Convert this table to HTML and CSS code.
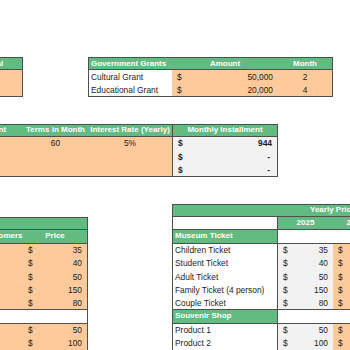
FILE: index.html
```html
<!DOCTYPE html>
<html lang="en">
<head>
    <meta charset="UTF-8">
    <meta name="viewport" content="width=device-width, initial-scale=1.0">
    <title>Museum Budget</title>
    <link rel="stylesheet" href="styles.css">
</head>
<body>

<div class="sheet">

    <!-- own funds -->
    <div class="tbl fund">
        <div class="cell head mid">Own Capital</div>
        <div class="cell peach"></div>
        <div class="cell peach"></div>
    </div>

    <!-- grants -->
    <div class="tbl grants">
        <div class="cell head">Government Grants</div>
        <div class="cell head mid">Amount</div>
        <div class="cell head mid">Month</div>
        <div class="cell">Cultural Grant</div>
        <div class="cell peach acc"><span>$</span><span>50,000</span></div>
        <div class="cell peach mid">2</div>
        <div class="cell">Educational Grant</div>
        <div class="cell peach acc"><span>$</span><span>20,000</span></div>
        <div class="cell peach mid">4</div>
    </div>

    <!-- loan -->
    <div class="tbl loan">
        <div class="cell head mid">Loan Amount</div>
        <div class="cell head mid">Terms in Month</div>
        <div class="cell head mid">Interest Rate (Yearly)</div>
        <div class="cell head mid split">Monthly Installment</div>
        <div class="cell peach"></div>
        <div class="cell peach mid">60</div>
        <div class="cell peach mid">5%</div>
        <div class="cell grey acc strong split"><span>$</span><span>944</span></div>
        <div class="cell peach"></div>
        <div class="cell peach"></div>
        <div class="cell peach"></div>
        <div class="cell grey acc strong split"><span>$</span><span class="nil">-</span></div>
        <div class="cell peach"></div>
        <div class="cell peach"></div>
        <div class="cell peach"></div>
        <div class="cell grey acc strong split"><span>$</span><span class="nil">-</span></div>
    </div>

    <!-- visitors -->
    <div class="tbl visitors">
        <div class="cell head span2 line"></div>
        <div class="cell head mid line">Number of Customers</div>
        <div class="cell head mid line">Price</div>
        <div class="cell peach"></div>
        <div class="cell peach acc"><span>$</span><span>35</span></div>
        <div class="cell peach"></div>
        <div class="cell peach acc"><span>$</span><span>40</span></div>
        <div class="cell peach"></div>
        <div class="cell peach acc"><span>$</span><span>50</span></div>
        <div class="cell peach"></div>
        <div class="cell peach acc"><span>$</span><span>150</span></div>
        <div class="cell peach line"></div>
        <div class="cell peach acc line"><span>$</span><span>80</span></div>
        <div class="cell line"></div>
        <div class="cell line"></div>
        <div class="cell peach"></div>
        <div class="cell peach acc"><span>$</span><span>50</span></div>
        <div class="cell peach"></div>
        <div class="cell peach acc"><span>$</span><span>100</span></div>
    </div>

    <!-- yearly prices -->
    <div class="tbl prices">
        <div class="cell head line"></div>
        <div class="cell head line span3 title">Yearly Price</div>

        <div class="cell line split-r"></div>
        <div class="cell head mid line">2025</div>
        <div class="cell head mid line">2026</div>
        <div class="cell head mid line">2027</div>

        <div class="cell head line split-r">Museum Ticket</div>
        <div class="cell line"></div>
        <div class="cell line"></div>
        <div class="cell line"></div>

        <div class="cell split-r">Children Ticket</div>
        <div class="cell grey acc"><span>$</span><span>35</span></div>
        <div class="cell peach acc"><span>$</span><span>40</span></div>
        <div class="cell peach"></div>

        <div class="cell split-r">Student Ticket</div>
        <div class="cell grey acc"><span>$</span><span>40</span></div>
        <div class="cell peach acc"><span>$</span><span>45</span></div>
        <div class="cell peach"></div>

        <div class="cell split-r">Adult Ticket</div>
        <div class="cell grey acc"><span>$</span><span>50</span></div>
        <div class="cell peach acc"><span>$</span><span>55</span></div>
        <div class="cell peach"></div>

        <div class="cell split-r">Family Ticket (4 person)</div>
        <div class="cell grey acc"><span>$</span><span>150</span></div>
        <div class="cell peach acc"><span>$</span><span>160</span></div>
        <div class="cell peach"></div>

        <div class="cell split-r line">Couple Ticket</div>
        <div class="cell grey acc line"><span>$</span><span>80</span></div>
        <div class="cell peach acc line"><span>$</span><span>85</span></div>
        <div class="cell peach line"></div>

        <div class="cell head line split-r">Souvenir Shop</div>
        <div class="cell line"></div>
        <div class="cell line"></div>
        <div class="cell line"></div>

        <div class="cell split-r">Product 1</div>
        <div class="cell grey acc"><span>$</span><span>50</span></div>
        <div class="cell peach acc"><span>$</span><span>55</span></div>
        <div class="cell peach"></div>

        <div class="cell split-r">Product 2</div>
        <div class="cell grey acc"><span>$</span><span>100</span></div>
        <div class="cell peach acc"><span>$</span><span>110</span></div>
        <div class="cell peach"></div>
    </div>

</div>

</body>
</html>
```

FILE: styles.css
```css
* {
    box-sizing: border-box;
}
body {
    margin: 0;
    background: white;
    font-family: "Liberation Sans", Arial, sans-serif;
    font-size: 8.4px;
    color: #1c1c1c;
    overflow: hidden;
}

/* worksheet columns A..G, every row 20px at 2/3 zoom */
.sheet {
    display: grid;
    grid-template-columns: 86px 65px 84px 106px 55px 45px 40px;
    grid-template-rows: repeat(22, 13.333px);
    margin-left: -63px;
    padding-top: 57px;
    width: 481px;
}

.tbl {
    display: grid;
    grid-template-columns: subgrid;
    grid-template-rows: subgrid;
    border: 1px solid #4f4f4f;
}
.fund { grid-column: 1; grid-row: 1 / 4; }
.grants { grid-column: 3 / 6; grid-row: 1 / 4; }
.loan { grid-column: 1 / 5; grid-row: 6 / 10; }
.visitors { grid-column: 1 / 3; grid-row: 13 / 23; border-bottom: none; }
.prices { grid-column: 4 / 8; grid-row: 12 / 23; border-bottom: none; border-right: none; }

.cell {
    display: flex;
    align-items: center;
    padding: 0 2px;
    white-space: nowrap;
    overflow: hidden;
    line-height: 1;
}
.head {
    background: #62bb80;
    color: white;
    font-weight: bold;
    font-size: 8px;
}
.fund .head, .grants .head, .loan .head {
    border-bottom: 1px solid #4f4f4f;
}
.peach {
    background: #ffca9b;
}
.grey {
    background: #f2f2f2;
}
.mid {
    justify-content: center;
}
.acc {
    justify-content: space-between;
    padding: 0 5px 0 5px;
}
.strong {
    font-weight: bold;
}
.nil {
    padding-right: 2px;
}
.line {
    border-bottom: 1px solid #4f4f4f;
}
.split {
    border-left: 1px solid #4f4f4f;
}
.split-r {
    border-right: 1px solid #4f4f4f;
}
.span2 {
    grid-column: span 2;
}
.span3 {
    grid-column: span 3;
}
.title {
    padding-left: 32px;
}
```
